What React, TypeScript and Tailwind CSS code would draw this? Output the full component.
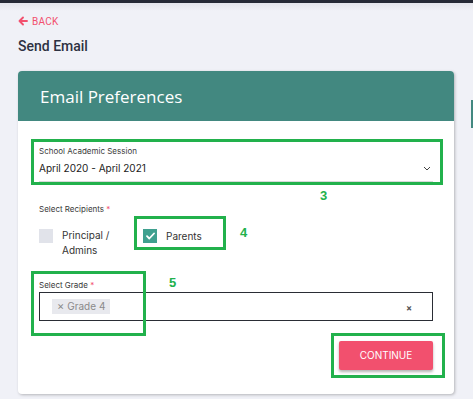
import React from "react";

const body = { fontFamily: "Inter, 'Open Sans', sans-serif" };

export default function App() {
  return (
    <div className="w-[473px] h-[399px] overflow-hidden bg-[#f0f1f7] relative" style={{ fontFamily: "Roboto, 'Liberation Sans', sans-serif" }}>
      <div className="h-[3px] bg-[#262a36]" />
      <div className="h-[8px] bg-gradient-to-b from-[#e4e5ec] to-[#f0f1f7]" />
      <div className="pl-[18px]">
        <div className="flex items-center gap-[4px] h-[16px] mt-[2px] text-[#f2506e] text-[10px] tracking-[0.3px]">
          <svg width="10" height="10" viewBox="0 0 10 10" fill="none" stroke="#f2506e" strokeWidth="1.9" strokeLinecap="round" strokeLinejoin="round">
            <path d="M9 5H1.5M5 1.5L1.5 5L5 8.5" />
          </svg>
          <span>BACK</span>
        </div>
        <div className="mt-[8px] text-[14px] leading-[18px] text-[#2d3142] font-medium">Send Email</div>
      </div>

      <div className="relative ml-[18px] mt-[16px] w-[436px] bg-white rounded-[4px] shadow-[1px_1px_3px_rgba(0,0,0,0.25)]" style={body}>
        <div className="h-[50px] bg-[#428880] rounded-t-[4px] flex items-center pl-[22px]">
          <span className="text-white text-[17px] font-medium leading-none" style={{ fontFamily: "'Open Sans', sans-serif" }}>Email Preferences</span>
        </div>
        <div className="pl-[21px] pr-[21px] pt-[24px] pb-[24px]">
          <div className="text-[8px] leading-[12px] text-[#3a3a3a]">School Academic Session</div>
          <div className="flex items-center justify-between h-[18px] mt-[2px] border-b border-[#d9d9d9] pb-[4px] box-content">
            <span className="text-[10px] text-[#222]">April 2020 - April 2021</span>
            <svg width="8" height="5" viewBox="0 0 8 5" fill="none" stroke="#444" strokeWidth="1" className="mr-[2px]">
              <path d="M1 1l3 3 3-3" />
            </svg>
          </div>

          <div className="mt-[21px] text-[8px] leading-[12px] text-[#3a3a3a]">
            Select Recipients <span className="text-[#f2506e]">*</span>
          </div>
          <div className="flex mt-[14px]">
            <div className="flex items-start w-[104px]">
              <div className="w-[14px] h-[14px] bg-[#e1e3ea] shrink-0" />
              <div className="ml-[9px] text-[10px] leading-[15px] text-[#333] -mt-[1px]">Principal /<br />Admins</div>
            </div>
            <div className="flex items-start">
              <div className="w-[14px] h-[14px] bg-[#3fa08f] flex items-center justify-center shrink-0">
                <svg width="9" height="8" viewBox="0 0 9 8" fill="none" stroke="white" strokeWidth="1.8" strokeLinecap="round" strokeLinejoin="round">
                  <path d="M1 4.2l2.3 2.3L8 1.5" />
                </svg>
              </div>
              <div className="ml-[9px] text-[10px] leading-[14px] text-[#333]">Parents</div>
            </div>
          </div>

          <div className="mt-[21px] text-[8px] leading-[12px] text-[#3a3a3a]">
            Select Grade <span className="text-[#f2506e]">*</span>
          </div>
          <div className="mt-[1px] h-[29px] border border-[#2a2d35] flex items-start pt-[6px] pl-[12px] pr-[20px] justify-between">
            <div className="bg-[#e8e9ee] h-[15px] px-[5px] flex items-center text-[10px] text-[#8a8a8a] gap-[3px]">
              <span className="text-[11px] leading-none">×</span>
              <span>Grade 4</span>
            </div>
            <span className="text-[9px] font-bold text-[#555] leading-none mt-[4px]">×</span>
          </div>

          <div className="flex justify-end mt-[20px]">
            <button className="w-[94px] h-[29px] bg-[#f2506e] text-white text-[10px] rounded-[2px] shadow-[0_2px_3px_rgba(0,0,0,0.3)]">CONTINUE</button>
          </div>
        </div>

        {/* annotations */}
        <div className="absolute left-[13px] top-[68px] w-[412px] h-[46px] border-[3px] border-[#22b14c]" />
        <div className="absolute left-[302px] top-[115px] text-[13px] font-bold text-[#22b14c]" style={{ fontFamily: "'Liberation Sans', sans-serif" }}>3</div>
        <div className="absolute left-[116px] top-[145px] w-[92px] h-[34px] border-[3px] border-[#22b14c]" />
        <div className="absolute left-[222px] top-[152px] text-[13px] font-bold text-[#22b14c]" style={{ fontFamily: "'Liberation Sans', sans-serif" }}>4</div>
        <div className="absolute left-[13px] top-[200px] w-[115px] h-[65px] border-[3px] border-[#22b14c]" />
        <div className="absolute left-[151px] top-[202px] text-[13px] font-bold text-[#22b14c]" style={{ fontFamily: "'Liberation Sans', sans-serif" }}>5</div>
        <div className="absolute left-[313px] top-[262px] w-[114px] h-[45px] border-[3px] border-[#22b14c]" />
      </div>

      <div className="absolute left-[471px] top-[100px] w-[2px] h-[28px] bg-[#428880]" />
    </div>
  );
}
